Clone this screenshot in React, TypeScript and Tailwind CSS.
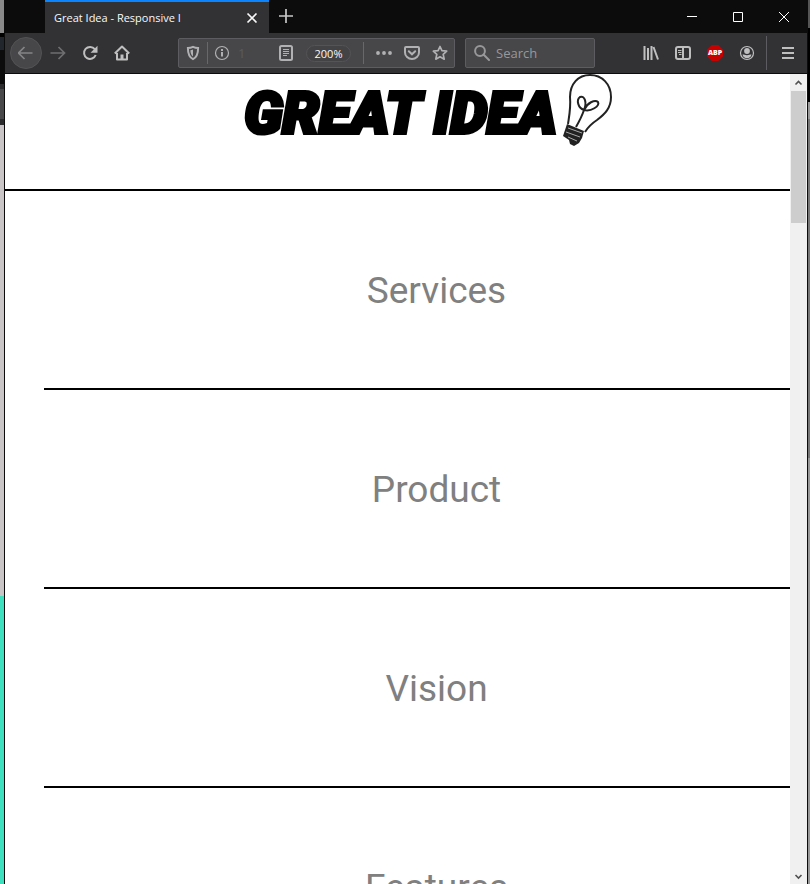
import type { ReactNode } from "react";

const ui = "font-['Open_Sans','Noto_Sans',sans-serif]";

function Icon({ children }: { children: ReactNode }) {
  return (
    <svg viewBox="0 0 16 16" className="size-4 shrink-0 fill-none stroke-current stroke-2" aria-hidden="true">
      {children}
    </svg>
  );
}

function ToolButton({ label, children, className = "" }: { label: string; children: ReactNode; className?: string }) {
  return (
    <button type="button" aria-label={label} className={`flex h-8 w-8 shrink-0 items-center justify-center ${className}`}>
      {children}
    </button>
  );
}

function TitleBar() {
  return (
    <div className="flex h-[33px] shrink-0 bg-[#0c0c0d] pl-10">
      <div className="flex w-[224px] items-center justify-between border-t-2 border-[#0a84ff] bg-[#323234] pr-[9px] pl-[9px]">
        <span className="pt-px text-[11px] whitespace-nowrap text-[#f9f9fa]">Great Idea - Responsive I</span>
        <button type="button" aria-label="Close tab" className="text-[#f9f9fa]">
          <Icon><path d="M3.5 3.5l9 9M12.5 3.5l-9 9" strokeWidth="1.7" /></Icon>
        </button>
      </div>
      <ToolButton label="New tab" className="ml-px text-[#c8c8c8]">
        <Icon><path d="M8 1v14M1 8h14" strokeWidth="1.7" /></Icon>
      </ToolButton>
      <div className="ml-auto flex text-white">
        <button type="button" aria-label="Minimize" className="flex w-[46px] items-center justify-center">
          <svg viewBox="0 0 10 10" className="size-[10px] stroke-current" aria-hidden="true"><path d="M0 4.5h10" /></svg>
        </button>
        <button type="button" aria-label="Maximize" className="flex w-[46px] items-center justify-center">
          <svg viewBox="0 0 10 10" className="size-[10px] fill-none stroke-current" aria-hidden="true"><path d="M.5.5h9v9h-9z" /></svg>
        </button>
        <button type="button" aria-label="Close window" className="flex w-[46px] items-center justify-center">
          <svg viewBox="0 0 10 10" className="size-[10px] stroke-current" aria-hidden="true"><path d="M0 0l10 10M10 0L0 10" /></svg>
        </button>
      </div>
    </div>
  );
}

function AddressBar() {
  return (
    <div className="ml-10 flex h-[30px] w-[277px] items-center rounded-xs border border-[#5c5c61] bg-[#474749] text-[#b1b1b3]">
      <button type="button" aria-label="Tracking protection" className="ml-[6px]">
        <Icon>
          <path d="M8 1.9c2 .9 3.7 1.1 5.1 1.1 0 5.5-1 9.2-5.1 11.1C3.9 12.2 2.9 8.5 2.9 3 4.3 3 6 2.8 8 1.9z" />
          <path d="M8 4.5v7C6 9.9 5.5 7.8 5.4 5.2 6.4 5.1 7.2 4.9 8 4.5z" className="fill-current stroke-none" />
        </Icon>
      </button>
      <span className="ml-[6px] h-[22px] w-px bg-[#67676d]" />
      <button type="button" aria-label="Site information" className="ml-[6px]">
        <Icon>
          <circle cx="8" cy="8" r="6.5" strokeWidth="1.2" />
          <path d="M8 7v4.5M8 4v2" />
        </Icon>
      </button>
      <input aria-label="Address" defaultValue="1" className="ml-[6px] w-7 min-w-0 flex-1 bg-transparent pt-[2px] pl-[2px] text-[13px] text-[#5a5a5d] outline-none" />
      <button type="button" aria-label="Reader view">
        <Icon>
          <rect x="2" y="1" width="12" height="14" rx="1.5" />
          <path d="M5 4.5h6M5 6.5h6M5 8.5h6M5 10.5h4" strokeWidth="1" />
        </Icon>
      </button>
      <button type="button" className="ml-3 h-[17px] w-[45px] rounded-full border border-[#545458] bg-[#434345] text-[11px] leading-[15px] text-[#f9f9fa]">200%</button>
      <span className="ml-3 h-[22px] w-px bg-[#67676d]" />
      <button type="button" aria-label="Page actions" className="ml-3">
        <Icon>
          <path d="M2 8h.01M8 8h.01M14 8h.01" strokeWidth="3.8" strokeLinecap="round" />
        </Icon>
      </button>
      <button type="button" aria-label="Save to Pocket" className="ml-3">
        <Icon>
          <path d="M2 2h12a1 1 0 0 1 1 1v4.5a7 6.5 0 0 1-14 0V3a1 1 0 0 1 1-1z" />
          <path d="M4.8 6.2L8 9.3l3.2-3.1" strokeLinecap="round" />
        </Icon>
      </button>
      <button type="button" aria-label="Bookmark this page" className="mr-[6px] ml-3">
        <Icon><path d="M8 1.5l1.9 4.2 4.8.5-3.5 3.1 1 4.9L8 11.8l-4.2 2.400 1-4.9L1.3 6.2l4.8-.5z" strokeWidth="1.7" strokeLinejoin="round" /></Icon>
      </button>
    </div>
  );
}

function Toolbar() {
  return (
    <div className="flex h-[41px] shrink-0 items-center border-b border-[#0c0c0d] bg-[#323234] pl-[5px] text-[#bfbfc0]">
      <ToolButton label="Back" className="rounded-full border border-[#535355] bg-[#474749] text-[#858587]">
        <Icon><path d="M14.5 8H.5M6.5 2L.5 8l6 6" strokeWidth="1.7" /></Icon>
      </ToolButton>
      <ToolButton label="Forward" className="text-[#6f6f71]">
        <Icon><path d="M.5 8h14M8.5 2l6 6-6 6" strokeWidth="1.7" /></Icon>
      </ToolButton>
      <ToolButton label="Reload">
        <Icon>
          <path d="M12.8 4.2A6 6 0 1 0 13.7 10" />
          <path d="M15.5.8v7H8.5z" className="fill-current stroke-none" />
        </Icon>
      </ToolButton>
      <ToolButton label="Home">
        <Icon>
          <path d="M.8 8.5L8 1.5l7.2 7M3 8v6.5h10V8" strokeLinejoin="round" />
          <path d="M6.5 9.5h3v5h-3z" className="fill-current stroke-none" />
        </Icon>
      </ToolButton>
      <AddressBar />
      <label className="ml-[10px] flex h-[30px] w-[130px] items-center rounded-xs border border-[#5c5c61] bg-[#474749] pl-2 text-[#98989a]">
        <Icon><circle cx="6" cy="6" r="4.9" /><path d="M9.5 9.5l5.5 5.5" strokeLinecap="round" /></Icon>
        <input aria-label="Search" placeholder="Search" className="ml-[6px] min-w-0 flex-1 bg-transparent pt-[2px] text-[13px] outline-none placeholder:text-[#98989a]" />
      </label>
      <div className="ml-auto flex items-center">
        <ToolButton label="Library">
          <Icon><path d="M1.500 1v14M5 3v12M8.500 1v14M10.500 2l4.500 12.500" /></Icon>
        </ToolButton>
        <ToolButton label="Sidebars">
          <Icon>
            <rect x="1" y="2" width="14" height="12" rx="2" />
            <path d="M8 2v12" />
            <path d="M3 5.5h3.5M3 7.5h3.5M4 9.5h2.5" className="stroke-1" />
          </Icon>
        </ToolButton>
        <ToolButton label="Adblock Plus">
          <span className="flex size-4 items-center justify-center bg-[#c70000] text-[7px] font-extrabold text-white [clip-path:polygon(30%_0,70%_0,100%_30%,100%_70%,70%_100%,30%_100%,0_70%,0_30%)]">ABP</span>
        </ToolButton>
        <ToolButton label="Account">
          <Icon>
            <circle cx="8" cy="8" r="6.5" strokeWidth="1.2" />
            <circle cx="8" cy="6" r="2.9" className="fill-current stroke-none" />
            <path d="M3.5 9.5c1.5 0 2.5.7 4.5.7s3-.7 4.5-.7c-.5 2.500-2.300 3.800-4.500 3.800S4 12 3.500 9.500z" className="fill-current stroke-none" />
          </Icon>
        </ToolButton>
        <span className="ml-[3px] h-[34px] w-px bg-[#5c5c61]" />
        <ToolButton label="Open menu" className="mr-[3px] ml-[5px]">
          <Icon><path d="M2 3h12M2 8h12M2 13h12" /></Icon>
        </ToolButton>
      </div>
    </div>
  );
}

function Bulb() {
  return (
    <svg viewBox="0 0 52 74" className="h-[74px] w-[52px] shrink-0 fill-none stroke-[#222] stroke-2" aria-hidden="true">
      <path d="M7 50C8 43 10 34 9 23 9 10 17 1 29 1c12 0 21 9 21 22 0 11-6 17-14 23-6 4-9 7-12 12" />
      <path d="M15 53c4-7 6-11 8-17-6-2-8-10-4-13 5-2 7 6 4 13 3-7 11-11 14-8 2 4-7 10-14 8" />
      <path d="M6 50l17 7-2 7-3 5-5 3-4-2-1-4-6-4z" className="fill-[#222] stroke-none" />
      <path d="M7 54l14 5M5 58l14 5M7 63l9 4" className="stroke-[#aaa] stroke-1" />
    </svg>
  );
}

function Page() {
  return (
    <main className="min-w-0 flex-1 overflow-hidden bg-white">
      <header className="flex h-[117px] items-start justify-center border-b-2 border-black pl-[62px]">
        <h1 className="mt-[3px] mr-1 font-[Roboto,sans-serif] text-[58px] leading-[72px] font-black whitespace-pre text-black italic [-webkit-text-stroke:4px_#000]">GREAT IDEA</h1>
        <Bulb />
      </header>
      <nav aria-label="Main" className="ml-[39px] w-full font-[Roboto,sans-serif] text-[37px] leading-[60px] text-[#808080]">
        {["Services", "Product", "Vision", "Features"].map((name) => (
          <a key={name} href={`#${name.toLowerCase()}`} className="flex h-[199px] items-center justify-center border-b-2 border-black pt-[2px]">
            {name}
          </a>
        ))}
      </nav>
    </main>
  );
}

function Scrollbar() {
  return (
    <div className="flex w-[17px] shrink-0 flex-col items-center bg-[#f0f0f0] text-[#505050]" aria-hidden="true">
      <svg viewBox="0 0 17 17" className="size-[17px] fill-none stroke-current"><path d="M5.5 10.5l3-3 3 3" strokeWidth="1.6" /></svg>
      <div className="h-[132px] w-[15px] bg-[#cdcdcd]" />
      <svg viewBox="0 0 17 17" className="mt-auto size-[17px] fill-none stroke-current"><path d="M5.5 8l3 3 3-3" strokeWidth="1.6" /></svg>
    </div>
  );
}

export default function App() {
  return (
    <div className={`flex h-screen overflow-hidden bg-[#0c0c0d] ${ui}`}>
      <div className="flex w-1 shrink-0 flex-col" aria-hidden="true">
        <div className="h-[33px] bg-[#8a8a8a]" />
        <div className="h-1 bg-black" />
        <div className="h-[13px] bg-[#20262b]" />
        <div className="h-[34px] bg-[#0c0c0d]" />
        <div className="h-[5px] bg-[#2c2c2e]" />
        <div className="h-[30px] bg-[#48484a]" />
        <div className="h-[6px] bg-[#2c2c2e]" />
        <div className="h-[471px] bg-[#c9c4c6]" />
        <div className="flex-1 bg-[#3fe0bf]" />
      </div>
      <div className="flex min-w-0 flex-1 flex-col border-x border-[#0c0c0d]">
        <TitleBar />
        <Toolbar />
        <div className="flex min-h-0 flex-1">
          <Page />
          <Scrollbar />
        </div>
      </div>
      <div className="flex w-[2px] shrink-0 flex-col" aria-hidden="true">
        <div className="h-[28px] bg-[#555]" />
        <div className="h-[74px] bg-black" />
        <div className="h-[17px] bg-[#999]" />
        <div className="h-[339px] bg-[#777]" />
        <div className="flex-1 bg-[#999]" />
      </div>
    </div>
  );
}
